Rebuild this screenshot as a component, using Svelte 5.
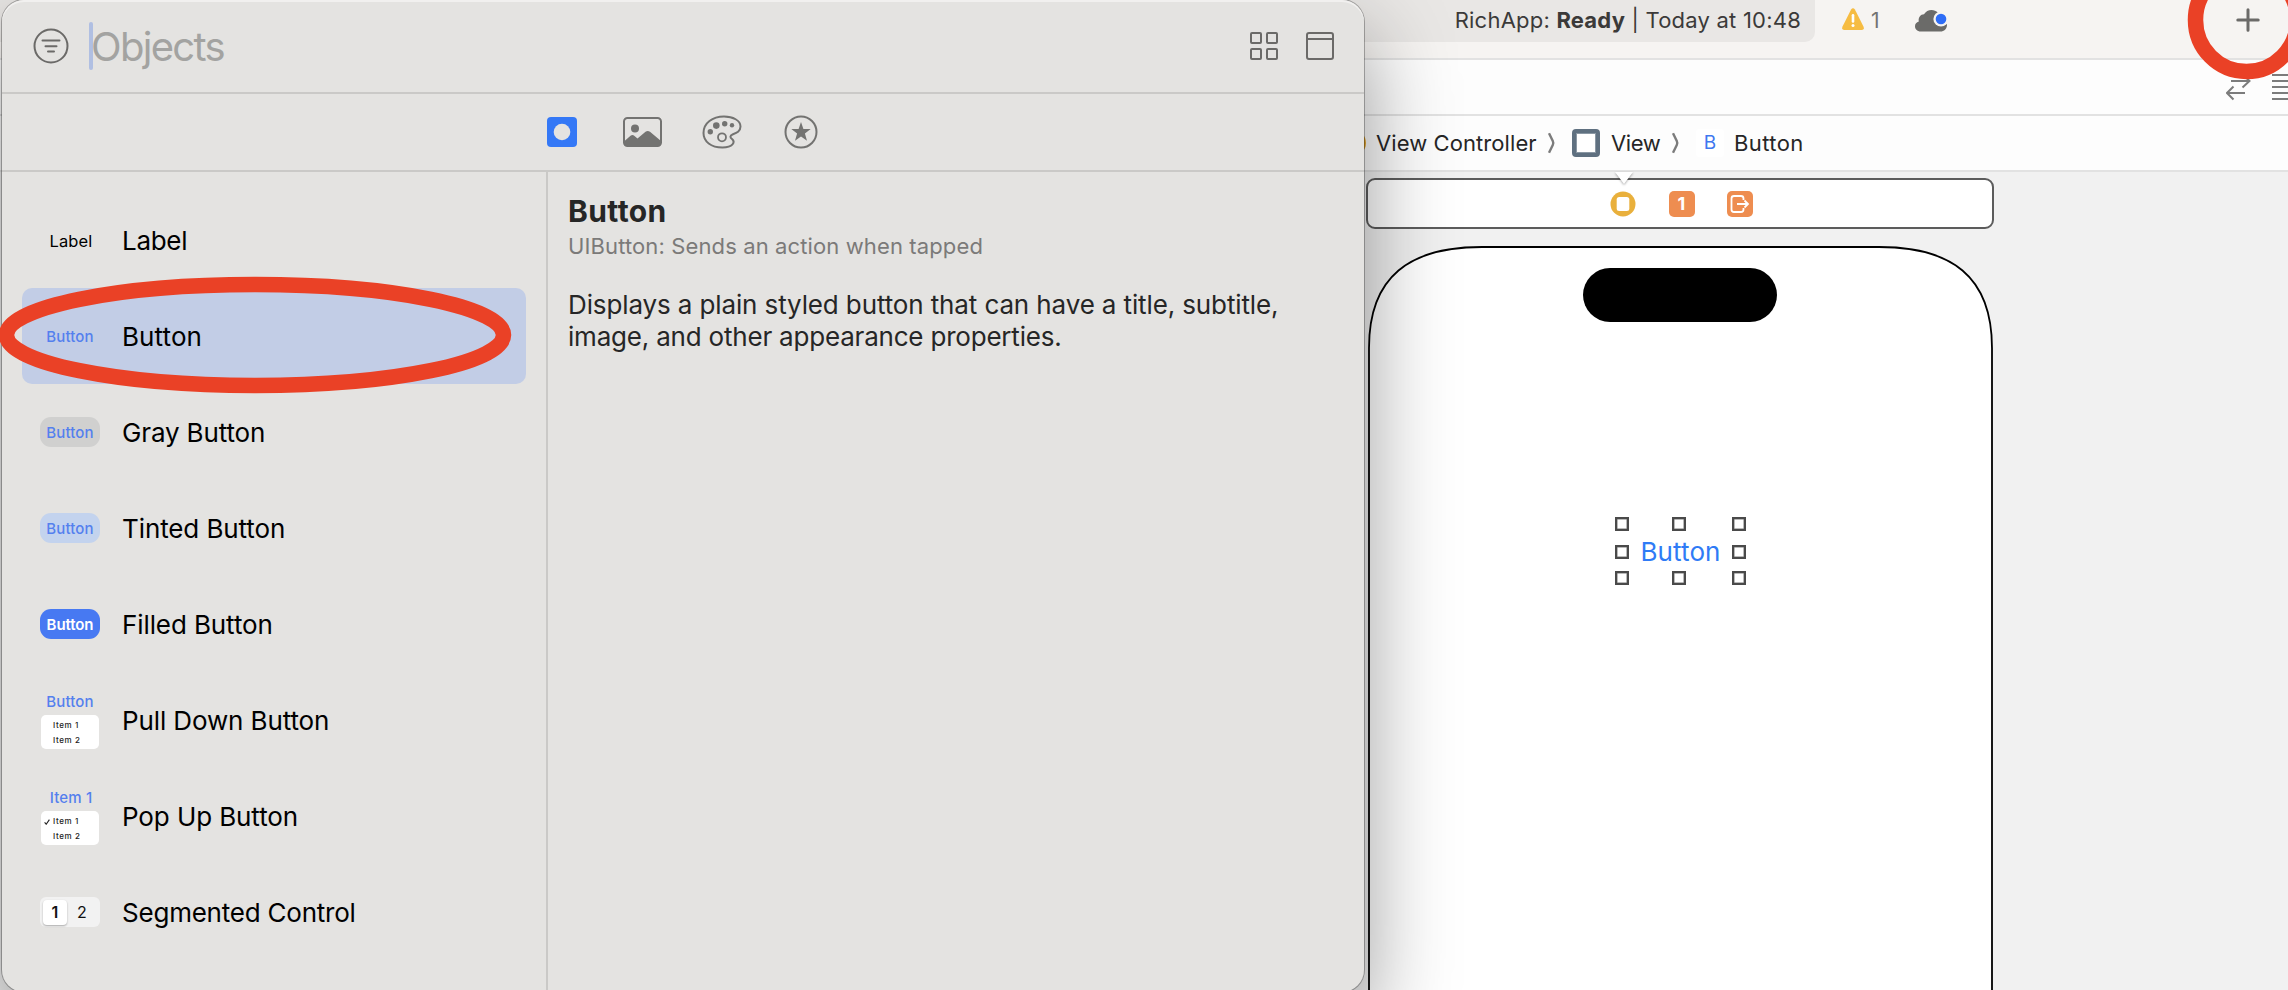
<script>
  const objects = [
    { name: 'Label', kind: 'label', ls: -0.3 },
    { name: 'Button', kind: 'plain', selected: true, ls: 0.1 },
    { name: 'Gray Button', kind: 'gray', ls: -0.15 },
    { name: 'Tinted Button', kind: 'tinted', ls: -0.1 },
    { name: 'Filled Button', kind: 'filled', ls: -0.1 },
    { name: 'Pull Down Button', kind: 'pulldown', ls: -0.12 },
    { name: 'Pop Up Button', kind: 'popup', ls: -0.1 },
    { name: 'Segmented Control', kind: 'segmented', ls: -0.22 }
  ];
  const handles = [
    [0, 0], [57, 0], [117, 0],
    [0, 28], [117, 28],
    [0, 54], [57, 54], [117, 54]
  ];
</script>

<div class="screen">
  <div class="editor">
    <header class="toolbar">
      <div class="status"><span>RichApp: <b>Ready</b> | Today at 10:48</span></div>
      <svg class="warn" width="24" height="23" viewBox="0 0 24 23">
        <path d="M10.1 1.6Q12 -1 13.900 1.600L22.600 18.800Q23.500 22 20.800 22H3.200Q.500 22 1.400 18.800Z" fill="#f6bc42" />
        <path d="M12 7.200V13.500" stroke="#fff" stroke-width="2.600" stroke-linecap="round" />
        <circle cx="12" cy="17.500" r="1.500" fill="#fff" />
      </svg>
      <span class="count">1</span>
      <svg class="cloud" width="34" height="24" viewBox="0 0 34 24">
        <path d="M7 22.500C2.800 22.500 1 19.800 1 17.200C1 14.800 2.500 13 4.800 12.400C4 8.500 6.500 5.300 10 5.200C11.700 2.600 14.500 1 17.500 1C22.500 1 26.300 4.600 26.800 9.500C30.800 10.200 33 13 33 16C33 19.800 30 22.500 26.500 22.500Z" fill="#6b6b69" />
        <circle cx="27" cy="10" r="7.600" fill="#f6f4f2" />
        <circle cx="27" cy="10" r="5.300" fill="#2f6df6" />
      </svg>
      <svg class="plus" width="24" height="24" viewBox="0 0 24 24">
        <path d="M12 1.800V22.200M1.800 12H22.200" stroke="#6b6a68" stroke-width="3" stroke-linecap="round" />
      </svg>
    </header>
    <div class="tabbar">
      <svg width="62" height="32" viewBox="0 0 62 32" fill="none" stroke="#7c7c7c" stroke-width="2">
        <path d="M5 9H23.500M16.500 2L23.500 9L16.500 15.500M19 21H.800M7.500 14.500L1 21L7.500 27.500" />
        <path d="M46 3H62M46 9H62M46 15H62M46 21H62M46 27H62" />
      </svg>
    </div>
    <nav class="crumbs">
      <i class="vc"></i>
      <span class="c1">View Controller</span>
      <svg class="chev" width="9" height="22" viewBox="0 0 9 22"><path d="M2 1.200L5.800 9Q6.800 11 5.800 13L2 20.800" /></svg>
      <i class="view"></i>
      <span class="c2">View</span>
      <svg class="chev" width="9" height="22" viewBox="0 0 9 22"><path d="M2 1.200L5.800 9Q6.800 11 5.800 13L2 20.800" /></svg>
      <i class="b">B</i>
      <span class="c3">Button</span>
    </nav>
    <main class="canvas">
      <svg class="pointer" width="20" height="14" viewBox="0 0 20 14"><path d="M1 0H19L10 12Z" fill="#fff" /></svg>
      <div class="dock">
        <svg width="26" height="26" viewBox="0 0 26 26">
          <circle cx="13" cy="13" r="12.500" fill="#e9b03c" />
          <rect x="6.700" y="6" width="12.600" height="14" rx="2.500" fill="#fff" />
        </svg>
        <span class="responder">1</span>
        <svg width="26" height="26" viewBox="0 0 26 26">
          <rect width="26" height="26" rx="5" fill="#ee8d50" />
          <path d="M16.500 9V7.500Q16.500 5 14 5H7Q4.500 5 4.500 7.500V18.500Q4.500 21 7 21H14Q16.500 21 16.500 18.500V17" fill="none" stroke="#fff" stroke-width="1.800" />
          <path d="M10 13H20.500M17.500 9.500L21 13L17.500 16.500" fill="none" stroke="#fff" stroke-width="1.800" />
        </svg>
      </div>
      <div class="phone">
        <svg class="frame" width="626" height="744" viewBox="0 0 626 744">
          <path d="M1 760V102C1 30 42 1 114 1H511C583 1 624 30 624 102V760" fill="#fff" stroke="#000" stroke-width="1.800" />
        </svg>
        <div class="island"></div>
        <div class="selection">
          <span>Button</span>
          {#each handles as [x, y]}
            <i style="left:{x}px;top:{y}px"></i>
          {/each}
        </div>
      </div>
    </main>
  </div>

  <section class="library">
    <header class="search">
      <svg class="filter" width="36" height="36" viewBox="0 0 36 36" fill="none" stroke="#6b6a68" stroke-width="2">
        <circle cx="18" cy="18" r="16.500" />
        <path d="M9.500 12.500H26.500M12.500 18.200H23.500M15 23.500H21" stroke-linecap="round" />
      </svg>
      <i class="caret"></i>
      <span class="placeholder">Objects</span>
      <svg class="grid" width="28" height="28" viewBox="0 0 28 28" fill="none" stroke="#6b6a68" stroke-width="2">
        <rect x="1" y="1" width="10" height="10" rx="1" /><rect x="17" y="1" width="10" height="10" rx="1" />
        <rect x="1" y="17" width="10" height="10" rx="1" /><rect x="17" y="17" width="10" height="10" rx="1" />
      </svg>
      <svg width="28" height="28" viewBox="0 0 28 28" fill="none" stroke="#6b6a68" stroke-width="2">
        <rect x="1" y="1" width="26" height="26" rx="2" /><path d="M1 7H27" />
      </svg>
    </header>

    <div class="tabs">
      <svg width="30" height="30" viewBox="0 0 30 30">
        <rect width="30" height="30" rx="4" fill="#3478f6" /><circle cx="15" cy="15" r="8.300" fill="#e4e3e1" />
      </svg>
      <svg class="t2" width="39" height="30" viewBox="0 0 39 30">
        <rect x="1" y="1" width="37" height="28" rx="3.500" fill="none" stroke="#737371" stroke-width="2" />
        <circle cx="12" cy="11.500" r="4" fill="#737371" />
        <path d="M1 24.500L7.500 18.800Q9.500 17.300 11.500 19L14.500 21.500L22.500 14.800Q24.700 13 27 14.800L38 24V26Q38 29 35 29H4Q1 29 1 26Z" fill="#737371" />
      </svg>
      <svg class="t3" width="40" height="34" viewBox="0 0 40 34">
        <path d="M22 1.500C31 1.500 38.500 5.500 38.500 11.500C38.500 16.500 34.500 18 31 19.300C27.500 20.700 28 22.500 30 24C33.500 27 31 32.500 20.500 32.500C9 32.500 1.500 26.500 1.500 18C1.500 8 10.500 1.500 22 1.500Z" fill="none" stroke="#737371" stroke-width="2" />
        <circle cx="14.300" cy="10.600" r="3.300" fill="#737371" /><circle cx="22.700" cy="8.800" r="2.700" fill="#737371" />
        <circle cx="30" cy="10.300" r="2.200" fill="#737371" /><circle cx="8.300" cy="16.800" r="2.700" fill="#737371" />
        <circle cx="20" cy="22.300" r="4" fill="none" stroke="#737371" stroke-width="1.800" />
      </svg>
      <svg class="t4" width="34" height="34" viewBox="0 0 34 34">
        <circle cx="17" cy="17" r="15.500" fill="none" stroke="#737371" stroke-width="2" />
        <path d="M17 7L19.400 14.100H26.700L20.900 18.500L23 25.700L17 21.400L11 25.700L13.100 18.500L7.300 14.100H14.600Z" fill="#737371" />
      </svg>
    </div>

    <div class="body">
      <ul class="list">
        {#each objects as o}
          <li class:selected={o.selected}>
            <div class="thumb {o.kind}">
              {#if o.kind === 'label'}
                <span>Label</span>
              {:else if o.kind === 'pulldown' || o.kind === 'popup'}
                <span>{o.kind === 'popup' ? 'Item 1' : 'Button'}</span>
                <div class="menu">
                  <div>
                    {#if o.kind === 'popup'}
                      <svg width="6" height="6" viewBox="0 0 6 6"><path d="M.6 3.400L2.200 5.200L5.400 .6" fill="none" stroke="#222" stroke-width="1.100" /></svg>
                    {/if}
                    Item 1
                  </div>
                  <div>Item 2</div>
                </div>
              {:else if o.kind === 'segmented'}
                <b>1</b><em>2</em>
              {:else}
                <span>Button</span>
              {/if}
            </div>
            <span class="name" style="letter-spacing:{o.ls}px">{o.name}</span>
          </li>
        {/each}
      </ul>
      <article class="detail">
        <h1>Button</h1>
        <p class="sub">UIButton: Sends an action when tapped</p>
        <p class="desc"><span class="l1">Displays a plain styled button that can have a title, subtitle,</span><br /><span class="l2">image, and other appearance properties.</span></p>
      </article>
    </div>
  </section>

  <svg class="marks" width="2288" height="990" viewBox="0 0 2288 990" fill="none" stroke="#ea4126" stroke-width="15.500">
    <ellipse cx="255" cy="335" rx="248.500" ry="50.500" />
    <ellipse cx="2246.500" cy="20" rx="51" ry="51.500" />
  </svg>
</div>

<style>
  :global(body) { background: #f1f1f1; overflow: hidden; }
  .screen { position: relative; width: 2288px; height: 990px; overflow: hidden; font-family: Inter, sans-serif; color: #262626; }
  .screen :global(*) { box-sizing: border-box; }
  svg { display: block; flex: none; }
  i, em { font-style: normal; }
  span { white-space: nowrap; }

  .editor { display: flex; flex-direction: column; height: 990px; background: #f1f1f1; }
  .toolbar { height: 60px; background: #f6f4f2; border-bottom: 2px solid #e2e2e2; display: flex; align-items: flex-start; }
  .status { width: 1815px; height: 42px; background: #e9e7e5; border-radius: 0 0 10px 0; padding: 0 14px 0 0; display: flex; justify-content: flex-end; line-height: 40px; font-size: 22px; letter-spacing: .22px; color: #3b3a39; }
  .warn { margin: 8px 0 0 26px; }
  .count { margin-left: 6px; font-size: 21px; line-height: 42px; color: #737373; width: 14px; }
  .cloud { margin: 9px 0 0 29px; }
  .plus { margin: 8px 28px 0 auto; }
  .tabbar { height: 56px; background: #fdfdfd; border-bottom: 2px solid #e2e2e2; display: flex; justify-content: flex-end; padding-top: 12px; }
  .crumbs { height: 56px; background: #fdfdfd; border-bottom: 2px solid #e2e2e2; display: flex; align-items: center; padding-left: 1340px; font-size: 22px; line-height: 54px; }
  .vc { width: 26px; height: 26px; border-radius: 50%; background: #e9a82c; }
  .c1 { margin-left: 10px; width: 162px; letter-spacing: .08px; }
  .chev { margin-left: 9px; fill: none; stroke: #7c7c7c; stroke-width: 2.400; }
  .view { margin-left: 16px; width: 28px; height: 28px; border: 4px solid #5f7080; border-radius: 4px; background: #fff; box-shadow: inset 0 0 0 1px #8a97a3; }
  .c2 { margin-left: 11px; width: 51px; letter-spacing: -.4px; }
  .b { margin-left: 16px; width: 28px; height: 28px; line-height: 28px; text-align: center; background: #fff; color: #3f78f0; font-size: 19px; border-radius: 3px; }
  .c3 { margin-left: 10px; letter-spacing: .4px; }

  .canvas { flex: 1; position: relative; padding-left: 1366px; padding-top: 6px; }
  .pointer { position: absolute; left: 1614px; top: 0; filter: drop-shadow(0 1px 1px rgba(0, 0, 0, .35)); }
  .dock { width: 628px; height: 51px; border: 2px solid #5c5c5c; border-radius: 9px; background: #fff; display: flex; gap: 32.500px; justify-content: center; align-items: center; padding-left: 3px; }
  .responder { width: 26px; height: 26px; border-radius: 5px; background: #ee8d50; color: #fff; font-weight: 700; font-size: 18px; line-height: 26px; text-align: center; }
  .phone { position: relative; width: 626px; height: 744px; margin: 17px 0 0 2px; }
  .frame { position: absolute; left: 0; top: 0; }
  .island { position: absolute; left: 215px; top: 22px; width: 194px; height: 54px; border-radius: 27px; background: #000; }
  .selection { position: absolute; left: 247px; top: 271px; width: 131px; height: 68px; display: flex; justify-content: center; align-items: center; color: #2f7bf6; font-size: 26px; letter-spacing: .1px; }
  .selection i { position: absolute; width: 14px; height: 14px; border: 2px solid #4a4a4a; background: #fff; box-shadow: inset 0 0 0 .5px #777; }

  .library { position: absolute; left: 2px; top: 0; width: 1362px; height: 992px; background: #e4e3e1; border-radius: 22px; box-shadow: inset 0 2px 0 #f1f0ef, 0 0 0 1px rgba(0, 0, 0, .28), 0 36px 90px rgba(0, 0, 0, .42); display: flex; flex-direction: column; }
  .search { height: 94px; border-bottom: 2px solid #cac9c7; display: flex; align-items: center; padding: 0 30px 0 31px; }
  .caret { width: 4px; height: 48px; border-radius: 2px; background: #b0bfe2; margin-left: 20px; }
  .placeholder { font-size: 40px; color: #a3a3a1; margin-left: -2px; letter-spacing: -1.700px; }
  .grid { margin-left: auto; margin-right: 28px; }
  .tabs { height: 78px; border-bottom: 2px solid #cac9c7; display: flex; align-items: center; padding: 0 0 0 545px; }
  .t2 { margin-left: 46px; }
  .t3 { margin-left: 40px; }
  .t4 { margin-left: 42px; }
  .body { flex: 1; display: flex; }
  .list { list-style: none; margin: 0; width: 546px; padding: 20px 20px 0; border-right: 2px solid #cac9c7; }
  .list li { height: 96px; display: flex; align-items: center; padding-left: 18px; border-radius: 10px; color: #000; }
  .list li.selected { background: #c2cde6; }
  .name { font-size: 26px; margin-left: 22px; }
  .thumb { width: 60px; height: 30px; border-radius: 11px; display: flex; align-items: center; justify-content: center; font-size: 15px; font-weight: 500; letter-spacing: .15px; color: #5480ee; }
  .label { color: #000; font-size: 16.500px; font-weight: 400; padding: 2px 0 0 2px; }
  .gray { background: #d0d0cf; }
  .tinted { background: #c3d3ee; }
  .filled { background: #4779f2; color: #fff; font-weight: 600; letter-spacing: -.1px; }
  .pulldown, .popup { flex-direction: column; height: 58px; }
  .pulldown span, .popup span { line-height: 20px; margin-top: 1px; }
  .popup span { padding-left: 2px; }
  .menu { width: 58px; height: 34px; background: #fff; border-radius: 5px; margin-top: 3px; padding: 3px 0 0 12px; font-size: 8px; line-height: 15px; letter-spacing: .6px; color: #222; }
  .menu div { position: relative; }
  .menu svg { position: absolute; left: -9px; top: 5px; }
  .segmented { background: #f2f2f2; border-radius: 6px; justify-content: flex-start; padding: 0 3px; font-size: 16px; color: #111; }
  .segmented b { width: 25px; height: 25px; line-height: 25px; background: #fff; border-radius: 4px; text-align: center; font-weight: 600; box-shadow: 0 1px 2px rgba(0, 0, 0, .3); }
  .segmented em { width: 31px; text-align: center; font-weight: 400; }
  .detail { padding: 21px 0 0 20px; }
  h1 { margin: 0; font-size: 30px; line-height: 36px; font-weight: 700; letter-spacing: .4px; }
  .sub { margin: 0; font-size: 22px; line-height: 34px; letter-spacing: .12px; color: #7b7a79; }
  .desc { margin: 26px 0 0; font-size: 26px; line-height: 32px; }
  .l1 { letter-spacing: -.12px; }
  .l2 { letter-spacing: -.2px; }
  .marks { position: absolute; left: 0; top: 0; pointer-events: none; }
</style>
